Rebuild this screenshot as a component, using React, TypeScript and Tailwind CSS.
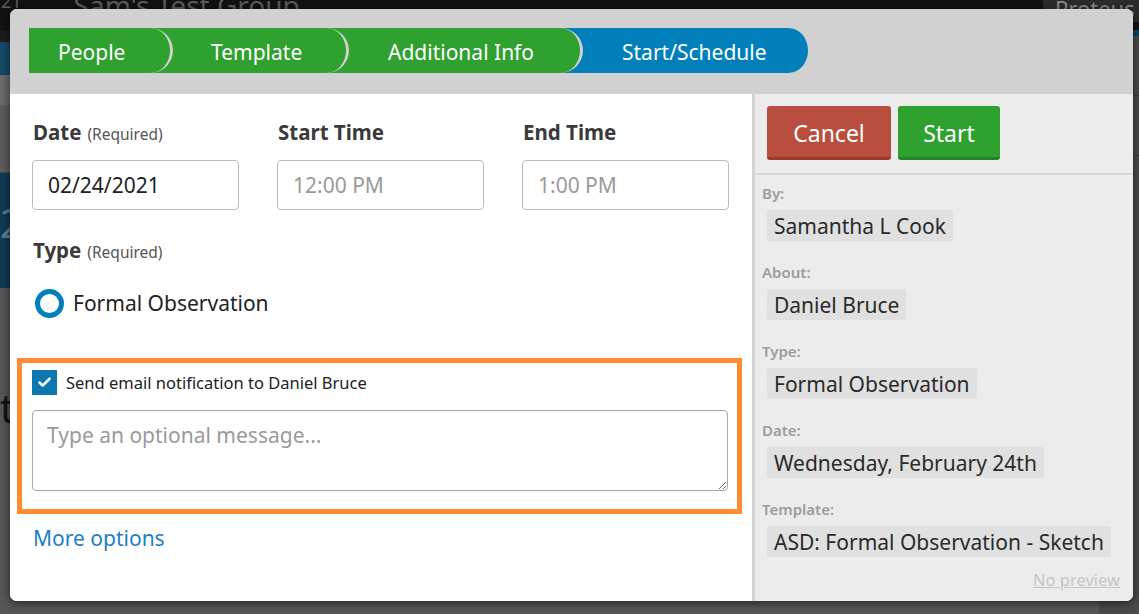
import React from 'react';
import { Check } from 'lucide-react';

const font = { fontFamily: '"Noto Sans", "Open Sans", Arial, sans-serif' };

const steps = [
  { label: 'People', cls: 'w-[144px] pl-[29px] rounded-l-[5px] z-40 bg-[#2ea12f]' },
  { label: 'Template', cls: 'w-[200px] pl-[62px] -ml-[24px] z-30 bg-[#2ea12f]' },
  { label: 'Additional Info', cls: 'w-[258px] pl-[63px] -ml-[24px] z-20 bg-[#2ea12f]' },
  { label: 'Start/Schedule', cls: 'w-[252px] pl-[63px] -ml-[24px] z-10 bg-[#017fba]' },
];

const summary = [
  { label: 'By:', value: 'Samantha L Cook' },
  { label: 'About:', value: 'Daniel Bruce' },
  { label: 'Type:', value: 'Formal Observation' },
  { label: 'Date:', value: 'Wednesday, February 24th' },
  { label: 'Template:', value: 'ASD: Formal Observation - Sketch' },
];

// 背景页面（被遮罩）
const Backdrop: React.FC = () => (
  <div className="flex flex-col w-full h-full">
    <div className="h-[30px] bg-[#121212] flex justify-between overflow-hidden">
      <div className="flex">
        <span className="text-[#5e5e5e] text-[18px] -mt-[12px] ml-[1px]">21</span>
        <span className="text-[#5a5a5a] text-[28px] -mt-[16px] ml-[52px]">Sam's Test Group</span>
      </div>
      <div className="w-[96px] bg-[#2b2b2b] text-[#8a8a8a] text-[22px] -mt-[8px] pl-[12px] h-[30px]">Proteus</div>
    </div>
    <div className="flex flex-1">
      <div className="w-[30px] flex flex-col">
        <div className="h-[12px] bg-[#1c1c1c]" />
        <div className="h-[33px] bg-[#164a66]" />
        <div className="h-[30px] bg-[#6b6b6b]" />
        <div className="h-[68px] bg-[#5c5c5c] border-b border-[#4a4a4a]" />
        <div className="h-[115px] bg-[#0e3b57] text-[#5f7f93] text-[40px] pt-[20px]">2</div>
        <div className="flex-1 bg-[#565656] text-[#111] text-[40px] pt-[100px] leading-none">t</div>
      </div>
      <div className="flex-1 bg-[#565656]" />
      <div className="w-[40px] flex flex-col bg-[#4b4b4b]">
        <div className="h-[6px] bg-[#0b4562]" />
        <div className="h-[60px] border-b border-[#3f3f3f]" />
        <div className="h-[60px] border-b border-[#3f3f3f]" />
        <div className="flex-1" />
      </div>
    </div>
  </div>
);

export default function App() {
  return (
    <div className="relative w-[1139px] h-[614px] overflow-hidden" style={font}>
      <Backdrop />

      {/* 弹窗 */}
      <div className="absolute left-[10px] top-[9px] w-[1123px] h-[592px] rounded-[7px] overflow-hidden flex flex-col bg-white shadow-[0_2px_10px_rgba(0,0,0,0.6)]">
        {/* 步骤条 */}
        <div className="h-[85px] bg-[#d1d1d1] flex items-start pt-[19px] pl-[19px] shrink-0">
          {steps.map((s) => (
            <div
              key={s.label}
              className={`relative h-[45px] pt-[3px] rounded-r-full border-r-[3px] border-[#d1d1d1] flex items-center text-white text-[21px] leading-[28px] whitespace-nowrap ${s.cls}`}
            >
              {s.label}
            </div>
          ))}
        </div>

        <div className="flex flex-1">
          {/* 左侧表单 */}
          <div className="w-[742px] bg-white pl-[22px] pt-[24px]">
            <div className="flex gap-[38px]">
              {[
                { label: 'Date', req: true, value: '02/24/2021', ph: false },
                { label: 'Start Time', req: false, value: '12:00 PM', ph: true },
                { label: 'End Time', req: false, value: '1:00 PM', ph: true },
              ].map((f) => (
                <div key={f.label} className="w-[207px]">
                  <div className="h-[28px] flex items-baseline gap-[6px] pl-[1px]">
                    <span className="text-[20.5px] leading-[28px] font-bold text-[#3a3a3a]">{f.label}</span>
                    {f.req && <span className="text-[15.5px] leading-[28px] text-[#555]">(Required)</span>}
                  </div>
                  <div
                    className={`mt-[14px] h-[50px] border border-[#bbbbbb] rounded-[4px] flex items-center pl-[15px] text-[21px] leading-[28px] ${
                      f.ph ? 'text-[#9a9a9a]' : 'text-[#222]'
                    }`}
                  >
                    {f.value}
                  </div>
                </div>
              ))}
            </div>

            <div className="mt-[26px] h-[28px] flex items-baseline gap-[6px] pl-[1px]">
              <span className="text-[20.5px] leading-[28px] font-bold text-[#3a3a3a]">Type</span>
              <span className="text-[15.5px] leading-[28px] text-[#555]">(Required)</span>
            </div>

            <div className="mt-[24px] h-[30px] flex items-center gap-[9px] pl-[3px]">
              <div className="w-[29px] h-[29px] rounded-full border-[5px] border-[#017fba] bg-white" />
              <span className="text-[21px] leading-[28px] text-[#222]">Formal Observation</span>
            </div>

            {/* 邮件通知 */}
            <div className="mt-[40px] -ml-[15px] w-[725px] h-[156px] border-[5px] border-[#ff8b33] pl-[10px] pt-[7px] pr-[9px]">
              <div className="flex items-center gap-[9px] h-[25px]">
                <div className="w-[25px] h-[25px] bg-[#0d78b0] flex items-center justify-center">
                  <Check size={15} strokeWidth={4} className="text-white" />
                </div>
                <span className="text-[16.5px] leading-[24px] text-[#222]">Send email notification to Daniel Bruce</span>
              </div>
              <textarea
                placeholder="Type an optional message..."
                className="mt-[15px] block w-[696px] h-[81px] border border-[#aaaaaa] rounded-[4px] px-[14px] py-[10px] text-[21px] leading-[28px] text-[#222] placeholder:text-[#9a9a9a] outline-none resize"
              />
            </div>

            <div className="mt-[10px] pl-[1px] text-[21px] leading-[28px] text-[#1d80c3]">More options</div>
          </div>

          <div className="w-[3px] bg-[#d3d3d3]" />

          {/* 右侧摘要 */}
          <div className="flex-1 bg-[#ececec] flex flex-col">
            <div className="flex gap-[7px] pl-[12px] pt-[12px] h-[79px]">
              <button className="w-[124px] h-[54px] pt-[3px] bg-[#ba4e3e] border-b-[3px] border-[#9b3b2d] rounded-[3px] text-white text-[23px] leading-[30px]">
                Cancel
              </button>
              <button className="w-[102px] h-[54px] pt-[3px] bg-[#2ea12f] border-b-[3px] border-[#24832a] rounded-[3px] text-white text-[23px] leading-[30px]">
                Start
              </button>
            </div>
            <div className="h-[2px] bg-[#d8d8d8]" />
            <div className="pl-[7px] pt-[8px] flex flex-col">
              {summary.map((s) => (
                <div key={s.label} className="mb-[21px] last:mb-0">
                  <div className="h-[20px] leading-[20px] text-[15px] font-semibold text-[#9c9c9c]">{s.label}</div>
                  <div className="mt-[7px] ml-[5px] inline-flex h-[31px] items-center px-[7px] bg-[#e0e0e0] rounded-[2px] text-[21px] leading-[28px] text-[#2a2a2a] whitespace-nowrap">
                    {s.value}
                  </div>
                </div>
              ))}
            </div>
            <div className="mt-[12px] pr-[13px] text-right text-[16.5px] leading-[22px] text-[#c6c6c6] underline">No preview</div>
          </div>
        </div>
      </div>
    </div>
  );
}
